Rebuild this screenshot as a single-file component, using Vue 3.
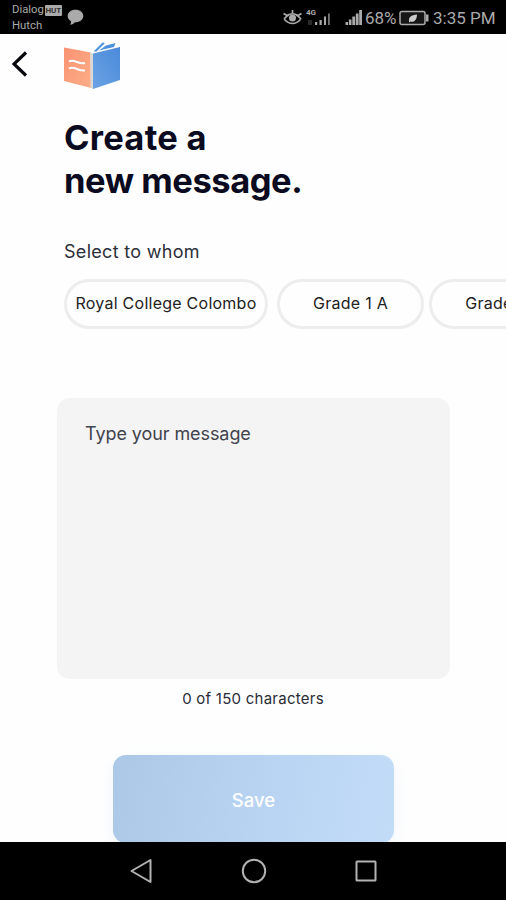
<script setup>
const recipients = ['Royal College Colombo', 'Grade 1 A', 'Grade 1 B']
const maxLength = 150
</script>

<template>
  <div class="screen">
    <header class="status">
      <div class="carriers">
        <div class="carrier"><span>Dialog</span><span class="tag">HUT</span></div>
        <div class="carrier"><span>Hutch</span></div>
      </div>
      <svg class="bubble" viewBox="0 0 17 17" width="17" height="17">
        <path d="M8.500 .8C4 .8.700 3.500.700 7c0 2.300 1.300 4.200 3.400 5.300.1 1.300-.2 2.500-.9 3.500 2.100-.3 3.600-1.200 4.700-2.500 4.800.1 8.400-2.600 8.400-6.300C16.300 3.500 13 .8 8.500.8Z" fill="#aaa" />
      </svg>
      <svg class="indicators" viewBox="0 0 82 28" width="82" height="28">
        <g fill="none" stroke="#aaa" stroke-width="1.700">
          <path d="M3.500 9.500 7 11.500Q12.500 8 18 11.500L21.500 9.500M12.500 6v4M4 15q3-3.500 5-4M21 15q-3-3.500-5-4M4 15q4 4.500 8.500 4.500T21 15" />
        </g>
        <circle cx="12.500" cy="14" r="3.500" fill="#aaa" />
        <g fill="#aaa">
          <path d="M35 18h2.200v3H35zM39.500 16h2.200v5h-2.200zM44 12.500h2v8.500h-2z" />
          <path d="M48 9.500h1.800V21H48z" fill="#777" />
          <path d="M65.500 18h2.600v3h-2.600zM68.900 15.500h2.600V21h-2.600zM72.300 12.500h2.800V21h-2.800zM75.800 9.500h2.800V21h-2.800zM79.200 6H82v15h-2.800z" />
          <path d="M28 16h4v5h-4z" fill="#292929" />
        </g>
      </svg>
      <span class="net">4G</span>
      <span class="percent">68%</span>
      <svg class="battery" viewBox="0 0 31 16" width="31" height="16">
        <rect x="1" y="1.500" width="25" height="13" rx="2" fill="#161616" stroke="#aaa" stroke-width="1.500" />
        <path d="M27 4.500h2.500v7H27z" fill="#aaa" />
        <path d="M10 11.500C9.500 7 12 5 18 4.500c0 5-3 8.500-6.500 7L10 12.500Z" fill="#ccc" />
      </svg>
      <span class="clock">3:35 PM</span>
    </header>

    <main class="page">
      <div class="topbar">
        <button class="back" aria-label="Back">
          <svg viewBox="0 0 16 26" width="16" height="26"><path d="M14 1.500 2 13l12 11.500" fill="none" stroke="#08080f" stroke-width="3.200" /></svg>
        </button>
        <svg class="logo" viewBox="0 0 68 56" width="68" height="56">
          <defs>
            <linearGradient id="cover" x1="0" y1="0" x2="1" y2="1">
              <stop offset="0" stop-color="#f99272" /><stop offset="1" stop-color="#fcae88" />
            </linearGradient>
            <linearGradient id="pages" x1="0" y1="1" x2="1" y2="0">
              <stop offset="0" stop-color="#6ba3e4" /><stop offset="1" stop-color="#4b8ada" />
            </linearGradient>
          </defs>
          <path d="M6 9.500 33 14.500V50L6 43Z" fill="url(#cover)" />
          <path d="M35 15.500 62 9v33L35 51Z" fill="url(#pages)" />
          <path d="M32 14 35 15.500V51.500L32.500 49Z" fill="#dcd8d6" />
          <path d="M35.500 13.500 44.500 4.500l2.500 .5L38.500 13.500ZM41 12.500l7-5 9.500-2.500-1.500 4Z" fill="#4e91dc" />
          <path d="M11 23.500q3-1.500 8 .5t8 1M11 30.500q3-1.500 8 .5t8 1.500" fill="none" stroke="#fff" stroke-width="2" />
        </svg>
      </div>

      <h1><span class="h-a">Create a</span><br /><span class="h-b">new message.</span></h1>
      <p class="label">Select to whom</p>
      <div class="chips">
        <button v-for="(name, i) in recipients" :key="name" class="chip" :class="{ wide: i === 0 }">
          <span>{{ name }}</span>
        </button>
      </div>

      <div class="message">Type your message</div>
      <p class="count">0 of {{ maxLength }} characters</p>
      <button class="save">Save</button>
    </main>

    <nav class="nav">
      <svg viewBox="0 0 26 26" width="26" height="26"><path d="M22.500 2v22L3.500 13Z" /></svg>
      <svg viewBox="0 0 26 26" width="26" height="26"><circle cx="13" cy="13" r="11.200" /></svg>
      <svg viewBox="0 0 26 26" width="26" height="26"><rect x="3.500" y="3.500" width="19" height="19" rx=".5" /></svg>
    </nav>
  </div>
</template>

<style>
body { margin: 0; overflow: hidden; }
</style>

<style scoped>
.screen {
  width: 506px;
  height: 900px;
  display: flex;
  flex-direction: column;
  overflow: hidden;
  background: #fefefe;
  font-family: Inter, "Liberation Sans", sans-serif;
  color: #111322;
}
button { padding: 0; border: 0; background: none; font: inherit; color: inherit; }
svg { display: block; flex: none; }
.status {
  position: relative;
  flex: none;
  box-sizing: border-box;
  height: 34px;
  display: flex;
  background: #000;
  color: #aaa;
  font-family: Roboto, sans-serif;
}
.carriers { flex: none; width: 55px; padding: 2px 0 0 12px; }
.carrier { display: flex; align-items: center; height: 16px; font-size: 11.300px; line-height: 16px; }
.tag {
  width: 17px; height: 11px; margin-left: 1px; border-radius: 1px;
  background: #aaa; color: #333; font-size: 8px; line-height: 11px; font-weight: 700; text-align: center;
}
.bubble { margin: 9px 0 0 0; }
.indicators { margin: 4px 0 0 196px; }
.net { position: absolute; left: 306px; top: 8px; font-size: 8px; line-height: 10px; font-weight: 700; }
.percent { width: 34px; margin-left: 3px; font-size: 17px; line-height: 36px; white-space: nowrap; }
.battery { margin: 10px 0 0 0; }
.clock { margin-left: 3px; font-size: 17px; line-height: 36px; white-space: nowrap; }
.page { flex: none; height: 808px; display: flex; flex-direction: column; overflow: hidden; }
.topbar { display: flex; height: 61px; flex: none; }
.back { width: 16px; height: 26px; margin: 17px 30px 0 12px; }
.logo { margin-top: 4px; }
h1 { margin: 21px 0 0 64px; font-size: 34.500px; line-height: 43px; font-weight: 700; color: #0a0b20; white-space: nowrap; }
.h-a { letter-spacing: .25px; }
.h-b { letter-spacing: -.45px; }
.label { margin: 37px 0 0 64px; font-size: 18px; letter-spacing: .3px; line-height: 26px; color: #2d2f3a; }
.chips { display: flex; gap: 5px; margin: 14px 0 0 64px; flex: none; }
.chip {
  flex: none; box-sizing: border-box; width: 147px; height: 50px; padding-bottom: 2px; border: 3px solid #ededed;
  border-radius: 25px; font-size: 16px; letter-spacing: .25px; white-space: nowrap; color: #222;
}
.chip.wide { width: 204px; margin-right: 4px; }
.message {
  flex: none; box-sizing: border-box; width: 393px; height: 281px; margin: 69px 0 0 57px;
  padding: 24px 28px; border-radius: 13px; background: #f4f4f4;
  font-size: 18px; letter-spacing: -.08px; line-height: 24px; color: #41434d;
}
.count { margin: 8px 0 0; text-align: center; font-size: 15px; letter-spacing: .25px; line-height: 24px; color: #2a2b35; }
.save {
  flex: none; width: 281px; height: 88px; margin: 44px 0 0 113px; padding-top: 2px; border-radius: 13px;
  background: linear-gradient(100deg, #abc8e6, #b8d3f1 50%, #c2dcf8);
  box-shadow: 0 5px 14px rgba(180, 208, 238, .2);
  color: #fff; font-size: 18.500px; font-weight: 500;
}
.nav {
  flex: none; box-sizing: border-box; height: 58px; display: flex; gap: 86.500px;
  padding: 16px 0 0 128px; background: #000;
}
.nav svg { fill: none; stroke: #b2b2b2; stroke-width: 2; stroke-linejoin: round; }
</style>
